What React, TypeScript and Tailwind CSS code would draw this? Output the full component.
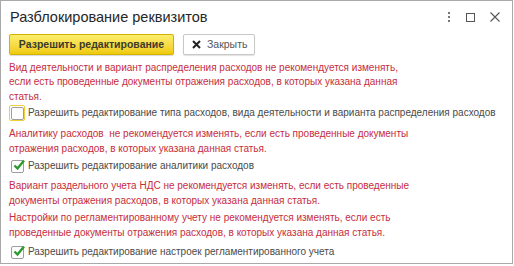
import React from "react";

const red = "text-[#c62d3c]";

function Check({ checked, focused }: { checked?: boolean; focused?: boolean }) {
  return (
    <span
      className={
        "relative flex items-center justify-center w-[16px] h-[16px] shrink-0 rounded-[2px] " +
        (focused ? "border border-[#f2cf3a]" : "border border-transparent")
      }
    >
      <span className="w-[13px] h-[13px] rounded-[2px] border border-[#9e9e9e] bg-white" />
      {checked && (
        <svg
          className="absolute left-[1px] top-[-2px]"
          width="16"
          height="16"
          viewBox="0 0 16 16"
        >
          <path
            d="M3.5 8.5 L6.5 11.5 L13 3.5"
            fill="none"
            stroke="#2f9a2f"
            strokeWidth="2.4"
          />
        </svg>
      )}
    </span>
  );
}

export default function App() {
  return (
    <div className="w-[514px] h-[266px] bg-white font-['Liberation_Sans',Arial,sans-serif]">
      <div className="w-[513px] h-[264px] border border-[#a9a9a9] flex flex-col">
        {/* header */}
        <div className="flex items-center justify-between h-[32px] pl-[9px] pr-[12px]">
          <span className="text-[14.5px] text-[#262626] pt-[1px]">Разблокирование реквизитов</span>
          <div className="flex items-center gap-[15px] text-[#555]">
            <svg width="4" height="10" viewBox="0 0 4 10">
              <rect x="1" y="0" width="2" height="2" fill="#777" />
              <rect x="1" y="4" width="2" height="2" fill="#777" />
              <rect x="1" y="8" width="2" height="2" fill="#777" />
            </svg>
            <svg width="9" height="9" viewBox="0 0 9 9">
              <rect x="0.5" y="0.5" width="8" height="8" fill="none" stroke="#555" />
            </svg>
            <svg width="10" height="10" viewBox="0 0 10 10">
              <path d="M0.5 0.5 L9.5 9.5 M9.5 0.5 L0.5 9.5" stroke="#555" strokeWidth="1.1" />
            </svg>
          </div>
        </div>

        {/* buttons */}
        <div className="flex items-center gap-[9px] pl-[8px] mt-[1px]">
          <button className="h-[21px] w-[165px] rounded-[2px] border border-[#d2b200] bg-gradient-to-b from-[#fdee6a] to-[#efca00] text-[10.5px] font-bold text-[#3b3b2a] shadow-[0_1px_1px_rgba(0,0,0,0.15)]">
            Разрешить редактирование
          </button>
          <button className="h-[21px] w-[72px] flex items-center gap-[6px] pl-[8px] rounded-[2px] border border-[#c8c8c8] bg-white text-[10.5px] text-[#555] shadow-[0_1px_1px_rgba(0,0,0,0.12)]">
            <svg width="9" height="9" viewBox="0 0 9 9">
              <path d="M1 1 L8 8 M8 1 L1 8" stroke="#222" strokeWidth="2" />
            </svg>
            Закрыть
          </button>
        </div>

        {/* content */}
        <div className="flex flex-col pl-[8px] pt-[5.5px] text-[10px] leading-[14.5px] whitespace-nowrap">
          <p className={red}>
            Вид деятельности и вариант распределения расходов не рекомендуется изменять,
            <br />
            если есть проведенные документы отражения расходов, в которых указана данная
            <br />
            статья.
          </p>
          <label className="flex items-center gap-[3px] mt-[1px] text-[#4a4a4a]">
            <Check focused />
            Разрешить редактирование типа расходов, вида деятельности и варианта распределения расходов
          </label>
          <p className={red + " mt-[6px]"}>
            Аналитику расходов&nbsp; не рекомендуется изменять, если есть проведенные документы
            <br />
            отражения расходов, в которых указана данная статья.
          </p>
          <label className="flex items-center gap-[3px] mt-[2px] text-[#4a4a4a]">
            <Check checked />
            Разрешить редактирование аналитики расходов
          </label>
          <p className={red + " mt-[5px]"}>
            Вариант раздельного учета НДС не рекомендуется изменять, если есть проведенные
            <br />
            документы отражения расходов, в которых указана данная статья.
          </p>
          <p className={red + " mt-[3px]"}>
            Настройки по регламентированному учету не рекомендуется изменять, если есть
            <br />
            проведенные документы отражения расходов, в которых указана данная статья.
          </p>
          <label className="flex items-center gap-[3px] mt-[4px] text-[#4a4a4a]">
            <Check checked />
            Разрешить редактирование настроек регламентированного учета
          </label>
        </div>
      </div>
    </div>
  );
}
